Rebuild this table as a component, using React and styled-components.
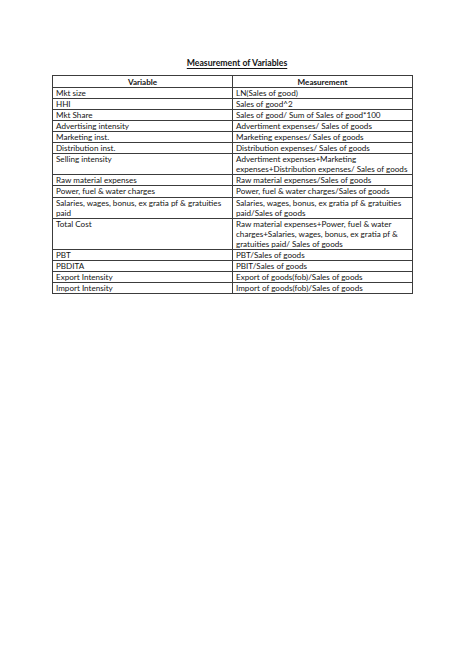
import React from "react";
import styled, { createGlobalStyle } from "styled-components";

const Global = createGlobalStyle`
  html, body { margin: 0; padding: 0; background: #ffffff; }
  body { font-family: "Lato", "Open Sans", sans-serif; color: #141414; }
`;

const Page = styled.div`
  width: 474px;
  height: 670px;
  box-sizing: border-box;
  padding: 57px 61px 0 52px;
  background: #ffffff;
`;

const Title = styled.h1`
  margin: 0 0 6px 0;
  font-size: 8.7px;
  line-height: 12px;
  font-weight: 700;
  text-align: center;
  text-decoration: underline;
  text-underline-offset: 1.5px;
  padding-left: 9px;
`;

const Table = styled.table`
  width: 361px;
  border-collapse: collapse;
  table-layout: fixed;
  font-size: 8.1px;
  line-height: 10.05px;
`;

const Head = styled.th`
  border: 1px solid #3c3c3c;
  font-weight: 700;
  text-align: center;
  padding: 1px 3px 0 3px;
  width: 50%;
`;

const Cell = styled.td`
  border: 1px solid #3c3c3c;
  padding: 0 3px;
  vertical-align: top;
  white-space: nowrap;
  overflow: hidden;
`;

const rows = [
  ["Mkt size", "LN(Sales of good)"],
  ["HHI", "Sales of good^2"],
  ["Mkt Share", "Sales of good/ Sum of Sales of good*100"],
  ["Advertising intensity", "Advertiment expenses/ Sales of goods"],
  ["Marketing inst.", "Marketing expenses/ Sales of goods"],
  ["Distribution inst.", "Distribution expenses/ Sales of goods"],
  ["Selling intensity", ["Advertiment expenses+Marketing", "expenses+Distribution expenses/ Sales of goods"]],
  ["Raw material expenses", "Raw material expenses/Sales of goods"],
  ["Power, fuel & water charges", "Power, fuel & water charges/Sales of goods"],
  [["Salaries, wages, bonus, ex gratia pf & gratuities", "paid"], ["Salaries, wages, bonus, ex gratia pf & gratuities", "paid/Sales of goods"]],
  ["Total Cost", ["Raw material expenses+Power, fuel & water", "charges+Salaries, wages, bonus, ex gratia pf &", "gratuities paid/ Sales of goods"]],
  ["PBT", "PBT/Sales of goods"],
  ["PBDITA", "PBIT/Sales of goods"],
  ["Export Intensity", "Export of goods(fob)/Sales of goods"],
  ["Import Intensity", "Import of goods(fob)/Sales of goods"],
];

const Lines = ({ value }) =>
  Array.isArray(value)
    ? value.map((l, i) => (
        <React.Fragment key={i}>
          {i > 0 && <br />}
          {l}
        </React.Fragment>
      ))
    : value;

export default function App() {
  return (
    <>
      <Global />
      <Page>
        <Title>Measurement of Variables</Title>
        <Table>
          <thead>
            <tr>
              <Head>Variable</Head>
              <Head>Measurement</Head>
            </tr>
          </thead>
          <tbody>
            {rows.map(([a, b], i) => (
              <tr key={i}>
                <Cell><Lines value={a} /></Cell>
                <Cell><Lines value={b} /></Cell>
              </tr>
            ))}
          </tbody>
        </Table>
      </Page>
    </>
  );
}
